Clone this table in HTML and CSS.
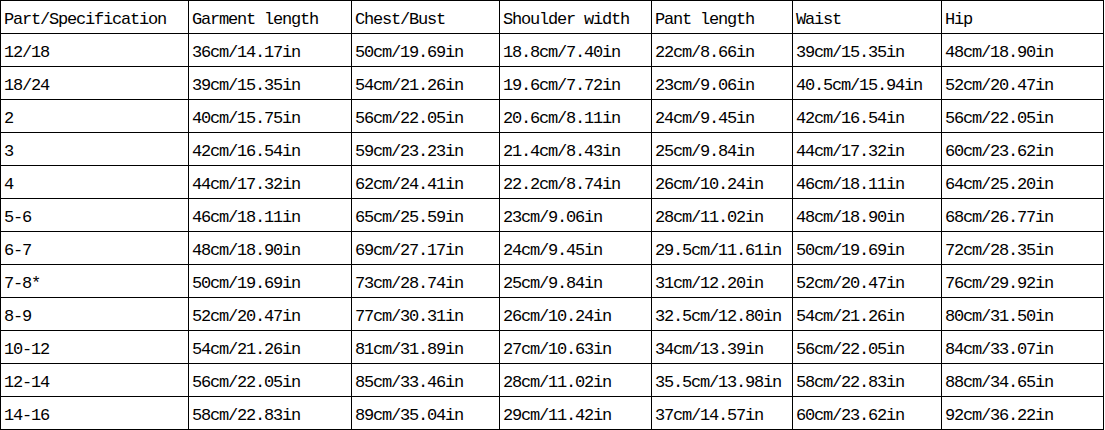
FILE: index.html
```html
<!DOCTYPE html>
<html>
<head>
<meta charset="utf-8">
<link rel="stylesheet" href="styles.css">
</head>
<body>
<table class="size-table">
  <colgroup>
    <col class="c1"><col class="c2"><col class="c3"><col class="c4"><col class="c5"><col class="c6"><col class="c7">
  </colgroup>
  <tbody>
    <tr><td>Part/Specification</td><td>Garment length</td><td>Chest/Bust</td><td>Shoulder width</td><td>Pant length</td><td>Waist</td><td>Hip</td></tr>
    <tr><td>12/18</td><td>36cm/14.17in</td><td>50cm/19.69in</td><td>18.8cm/7.40in</td><td>22cm/8.66in</td><td>39cm/15.35in</td><td>48cm/18.90in</td></tr>
    <tr><td>18/24</td><td>39cm/15.35in</td><td>54cm/21.26in</td><td>19.6cm/7.72in</td><td>23cm/9.06in</td><td>40.5cm/15.94in</td><td>52cm/20.47in</td></tr>
    <tr><td>2</td><td>40cm/15.75in</td><td>56cm/22.05in</td><td>20.6cm/8.11in</td><td>24cm/9.45in</td><td>42cm/16.54in</td><td>56cm/22.05in</td></tr>
    <tr><td>3</td><td>42cm/16.54in</td><td>59cm/23.23in</td><td>21.4cm/8.43in</td><td>25cm/9.84in</td><td>44cm/17.32in</td><td>60cm/23.62in</td></tr>
    <tr><td>4</td><td>44cm/17.32in</td><td>62cm/24.41in</td><td>22.2cm/8.74in</td><td>26cm/10.24in</td><td>46cm/18.11in</td><td>64cm/25.20in</td></tr>
    <tr><td>5-6</td><td>46cm/18.11in</td><td>65cm/25.59in</td><td>23cm/9.06in</td><td>28cm/11.02in</td><td>48cm/18.90in</td><td>68cm/26.77in</td></tr>
    <tr><td>6-7</td><td>48cm/18.90in</td><td>69cm/27.17in</td><td>24cm/9.45in</td><td>29.5cm/11.61in</td><td>50cm/19.69in</td><td>72cm/28.35in</td></tr>
    <tr><td>7-8*</td><td>50cm/19.69in</td><td>73cm/28.74in</td><td>25cm/9.84in</td><td>31cm/12.20in</td><td>52cm/20.47in</td><td>76cm/29.92in</td></tr>
    <tr><td>8-9</td><td>52cm/20.47in</td><td>77cm/30.31in</td><td>26cm/10.24in</td><td>32.5cm/12.80in</td><td>54cm/21.26in</td><td>80cm/31.50in</td></tr>
    <tr><td>10-12</td><td>54cm/21.26in</td><td>81cm/31.89in</td><td>27cm/10.63in</td><td>34cm/13.39in</td><td>56cm/22.05in</td><td>84cm/33.07in</td></tr>
    <tr><td>12-14</td><td>56cm/22.05in</td><td>85cm/33.46in</td><td>28cm/11.02in</td><td>35.5cm/13.98in</td><td>58cm/22.83in</td><td>88cm/34.65in</td></tr>
    <tr><td>14-16</td><td>58cm/22.83in</td><td>89cm/35.04in</td><td>29cm/11.42in</td><td>37cm/14.57in</td><td>60cm/23.62in</td><td>92cm/36.22in</td></tr>
  </tbody>
</table>
</body>
</html>
```
FILE: styles.css
```css
html, body {
  margin: 0;
  padding: 0;
  background: #ffffff;
}

.size-table {
  border-collapse: collapse;
  table-layout: fixed;
  width: 1103px;
  font-family: "Liberation Mono", "DejaVu Sans Mono", monospace;
  font-size: 17px;
  letter-spacing: -1.2px;
  color: #000000;
}

.c1 { width: 188px; }
.c2 { width: 163px; }
.c3 { width: 148px; }
.c4 { width: 152px; }
.c5 { width: 141px; }
.c6 { width: 149px; }
.c7 { width: 162px; }

.size-table tr {
  height: 33px;
}

.size-table td {
  border: 1px solid #000000;
  padding: 9px 0 0 3px;
  line-height: 20px;
  vertical-align: top;
  white-space: nowrap;
  overflow: hidden;
}
```
